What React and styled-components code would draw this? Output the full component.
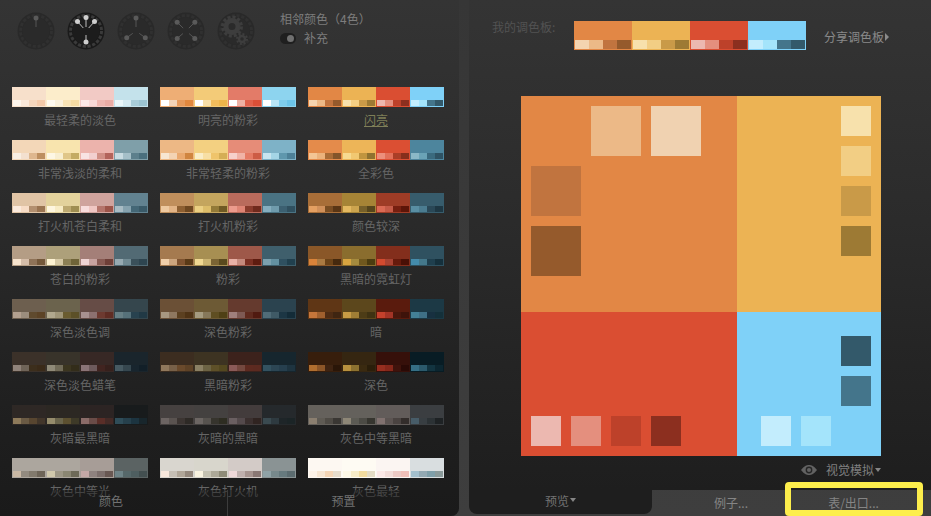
import React from "react";
import styled, { createGlobalStyle } from "styled-components";

const GlobalStyle = createGlobalStyle`
  html, body {
    margin: 0;
    padding: 0;
    background: #3a3a3a;
  }
  body {
    font-family: "Noto Sans CJK SC", "Liberation Sans", sans-serif;
  }
`;

// each palette: four groups of base colour + four small shades
const palettes = [
  ["最轻柔的淡色", "f7e0cb fdf5ec f9e8da f4d5bc f3c9a9|fcedcb fffaf0 fbf1dc f8e3b5 f5dca4|f2cac5 fbe8e6 f7d8d6 eeb7b1 eaaca5|c4e2eb eaf6f9 d5eaf1 a9cdd9 9cc4d1"],
  ["明亮的粉彩", "eeae75 ffffff f3d3b8 e69a5c e2883e|f3cb78 ffffff f8dfa8 f2bc5c efb54a|e37b68 ffffff eeb0a3 e0604a db4f37|8dd4ef ffffff b9e5f5 7fcdec 6cc4e8"],
  ["闪亮", "e28745 f4d4b0 ecb987 c1743f 955a2c|ecb354 f7e1ac f2ce84 c99a48 9d7a34|da4e32 ecb8b0 e48f7e bd412a 8c2f1f|7fd1f8 c3edfd a4e4fb 44758b 33596a"],
  ["非常浅淡的柔和", "f3d7b8 f9efe3 f3e0cf deb78f bd8f60|f8e4ae fdf7e4 f8eed0 e0c688 c4ab62|ecb3ac f8e3e3 f2cfcf d08f85 b3645b|7f9fa9 c9dbe1 a5bfc8 5c7f8c 4a6f7d"],
  ["非常轻柔的粉彩", "edb885 f7e6d2 f3d3b3 e9a86e d08540|f3d081 f9edc8 f7dfa4 efc46b d5ae55|e68c78 f6d1cb f0b3a7 e57b65 cd5c45|7eb2c7 c7e5f0 a4d5e6 5f97ad 4d8097"],
  ["全彩色", "e48b4b f3c595 ebb27c a96c37 84552a|edb558 f7da90 f1c872 c0953f 8f7230|db4f33 ec8f7c e27059 ab3e27 872f1c|4d859d 8ab8c7 6aa3b6 3a6a7e 2e5263"],
  ["打火机苍白柔和", "e0c4a5 fbeadc f7dcc6 b39070 9a7451|e3d29c fef6df f8ecc5 bda970 9f8e52|cfa39d f7dcdc efc6c3 b5756c 9c5449|628290 a9bcc4 86a2ae 446776 3a5a68"],
  ["打火机粉彩", "c08f5c eec9a0 e2b486 8e6032 6f4820|c4a55e ebcf82 dcbc69 937a38 6f5a24|b96b5c ec9b8d de8474 8a3b2c 6f2a1d|4a7383 85aebf 6f9bac 3c6071 30505f"],
  ["颜色较深", "a86e38 e4a062 d0905a 7a4d22 5a3615|a68436 e3b860 cca44e 76602a 55451c|9e3c26 da6a54 c45a47 761f10 5d1508|375c6c 598ea3 4b7c90 2a4857 1e3743"],
  ["苍白的粉彩", "b49d85 f7e3cd d5bda9 8f7358 74583a|ada07a fdf2d2 d6c9a5 8c8055 6f6438|a47f78 efd4d4 c7a3a0 875a53 6e3f38|526a74 97aab2 718a93 3a505a 2e4550"],
  ["粉彩", "a57a4f f0cfa9 cda67f 7f5330 5a3a17|a78f52 f0d892 c9b270 7a6434 5a4a1e|9e5849 e8b0a5 c58a7d 7a2f22 5e1c10|3f5f6c 7ca1af 6390a0 2f5060 21404e"],
  ["黑暗的霓虹灯", "8a5728 d9833a aa7a42 6b4318 45290e|8a6d2e d9a540 a58b3e 70581e 4b3c10|832e1c d24a2f a84232 661a0c 491006|2f5160 448bab 44788b 1f3f4e 15303c"],
  ["深色淡色调", "6d5f4f b3a08f 9b8d7d 5f4a2e 5c4326|6b634d b1a88e 9f9578 6a5c30 5c5028|664c46 a89190 8c7170 6d3a30 5f2d24|35464d 677f85 56717a 28424f 213945"],
  ["深色粉彩", "6b5036 a89780 8f7860 5c4020 4f3315|6d5a35 a59b80 86785a 5f4e22 4f4015|653a2e 9f7f7c 7e5a54 5f2a1e 501a10|2b434f 506c78 3f5a66 1c3644 142c38"],
  ["暗", "5f3615 c6763a a0602e 4e2c14 3f2511|5c471c c79b45 a07e35 4d3c16 3f3212|5a1b0d c4412c a33426 4a170c 3e130a|1c3945 438096 3f7086 173040 14303a"],
  ["深色淡色蜡笔", "3b3129 90837a 6f6458 3c2e1c 3a2a18|38332a 8f8a78 716b58 3c3620 332d1a|372825 8a7477 6d5a5c 412420 36201c|1a252c 475a62 36474f 18252e 121f28"],
  ["黑暗粉彩", "3c2d20 90785c 776048 6a4a2c 5e4226|3d3322 8a8064 6c6344 5e5028 54481f|3c221c 8a5a58 74483f 5e2a20 5c2a20|16262e 335260 2c4654 263f4e 1e3440"],
  ["深色", "371e0c b06e2f 8c5628 3f2412 2a1608|352611 b8913e 8c7230 3a2a10 2a1e0a|36100a 962e1f 85271a 3f130c 2a0a06|081c24 356f85 2b5a6c 123440 0c2630"],
  ["灰暗最黑暗", "2e2825 8d7a5a 6a5a44 584630 42362a|2c2823 958c6c 6a654c 5c5030 3e3a28|2c2423 8a6b68 6a4c48 5a2e28 442a26|181b1c 2f4d59 26404c 1c3440 18262c"],
  ["灰暗的黑暗", "464140 6c6462 5a5350 3c3532 2e2a26|444140 6c6663 57534f 36342d 2e2d22|433c3c 6a5f61 544a4c 3b302f 302421|25292c 3a4a50 2e3a40 1e2528 1b2426"],
  ["灰色中等黑暗", "65615c 8b7f70 5f5b54 4f4b45 3a3733|64615c 8e8777 5c5b54 4c4b45 36352f|625c5a 80716f 5c5452 4a4341 332d2b|3b3e41 475c68 383e42 2c3235 1e2224"],
  ["灰色中等光", "aca69e c9b8a4 928a7f 827a6d 6e6558|aca69e d0c8ac 9c9685 8a8672 6e6a58|a79d97 c4a8a6 8f827f 7d6f6c 695853|5b6363 6f8488 56686a 4e5e60 434f50"],
  ["灰色打火机", "d9d6cf f8e8dc c6bfb5 b0a698 94887c|d8d6cc faf4e0 c5c2b1 ada998 8f8c78|d3cbc7 eed8d8 bfb0ad a6948f 8a7874|8a9394 8fa2a6 77898c 677a7e 5c6c70"],
  ["灰色最轻", "fdf8f2 fdf3e8 f7e6d2 f4d5b5 e6dccb|fefbf3 fdf8e6 f7ecc8 f2dc9f e4dcc5|fbf5f2 fbe8e6 f2dcd8 ecc9c4 f0bfb8|d9dee0 a3bfcd 93a9b3 7f9fa9 8a9a9a"],
];

const Page = styled.div`
  display: flex;
  justify-content: space-between;
  width: 931px;
  height: 516px;
  overflow: hidden;
  background: linear-gradient(#363636, #3e3e3e);
`;

const LeftPanel = styled.div`
  position: relative;
  width: 459px;
  height: 516px;
  overflow: hidden;
  border-radius: 0 0 8px 0;
  background: linear-gradient(#343434, #2b2b2b 40%, #1e1e1e 85%, #1b1b1b);
`;

const Header = styled.div`
  display: flex;
  height: 87px;
  box-sizing: border-box;
  padding: 12px 0 0 17px;
`;

const Dials = styled.div`
  display: flex;
  gap: 12px;
`;

const DialIcon = styled.svg`
  width: 38px;
  height: 38px;
`;

const Harmony = styled.div`
  margin-left: 25px;
  color: #7d7d7d;
  font-size: 12px;
  line-height: 14px;
`;

const ToggleRow = styled.div`
  display: flex;
  align-items: center;
  gap: 8px;
  margin-top: 5px;
`;

const Toggle = styled.div`
  display: flex;
  align-items: center;
  justify-content: flex-end;
  width: 16px;
  height: 11px;
  margin-top: 1px;
  padding: 0 2px;
  box-sizing: border-box;
  border-radius: 6px;
  background: #1f1f1f;

  &::after {
    content: "";
    width: 7px;
    height: 7px;
    border-radius: 50%;
    background: #707070;
  }
`;

const PaletteGrid = styled.div`
  display: grid;
  grid-template-columns: repeat(3, 136px);
  grid-auto-rows: 53px;
  column-gap: 12px;
  padding-left: 12px;
`;

const PaletteItem = styled.div`
  display: flex;
  flex-direction: column;
  align-items: center;
`;

const Swatch = styled.div`
  display: flex;
  width: ${(p) => p.$width}px;
  height: ${(p) => p.$height}px;
  flex: none;
`;

const Group = styled.div`
  flex: 1;
  display: flex;
  flex-direction: column;
  justify-content: flex-end;
  padding: 0 1px 1px;
  background: ${(p) => p.$color};
`;

const Shades = styled.div`
  display: flex;
  height: ${(p) => p.$height}px;
`;

const Shade = styled.div`
  flex: 1;
  background: ${(p) => p.$color};
`;

const PaletteName = styled.div`
  margin-top: 5px;
  font-size: 12px;
  line-height: 16px;
  color: ${(p) => (p.$active ? "#7f7f58" : "#656565")};
  text-decoration: ${(p) => (p.$active ? "underline" : "none")};
`;

const LeftTabs = styled.div`
  position: absolute;
  left: 0;
  right: 0;
  bottom: 0;
  display: flex;
  height: 26px;
  background: rgba(27, 27, 27, 0.45);
`;

const LeftTab = styled.div`
  display: flex;
  justify-content: center;
  width: ${(p) => p.$width}px;
  padding: 2px ${(p) => p.$padRight || 0}px 0 0;
  box-sizing: border-box;
  font-size: 12px;
  line-height: 18px;
  color: #727272;
  border-right: ${(p) => (p.$divider ? "1px solid #3c3c3c" : "none")};
`;

const RightPanel = styled.div`
  position: relative;
  display: flex;
  flex-direction: column;
  width: 462px;
  height: 516px;
`;

const RightBody = styled.div`
  display: flex;
  flex-direction: column;
  align-items: center;
  height: 490px;
  padding-left: 2px;
  box-sizing: border-box;
  background: linear-gradient(#343434, #2b2b2b 45%, #1e1e1e);
`;

const MyPalette = styled.div`
  display: flex;
  align-self: stretch;
  height: 96px;
  box-sizing: border-box;
  padding: 21px 0 0 21px;
`;

const MyLabel = styled.div`
  width: 82px;
  font-size: 12px;
  line-height: 14px;
  color: #525252;
  margin-top: -1px;
`;

const ShareLink = styled.div`
  display: flex;
  align-items: center;
  gap: 1px;
  height: 14px;
  margin: 9px 0 0 18px;
  font-size: 12px;
  line-height: 14px;
  color: #8a8a8a;
`;

const TriangleRight = styled.span`
  width: 0;
  height: 0;
  border-style: solid;
  border-width: 4px 0 4px 4px;
  border-color: transparent transparent transparent #8a8a8a;
`;

const TriangleDown = styled.span`
  width: 0;
  height: 0;
  margin-left: 1px;
  border-style: solid;
  border-width: 4px 3.5px 0 3.5px;
  border-color: #858585 transparent transparent transparent;
`;

const Board = styled.div`
  display: grid;
  grid-template-columns: 216px 144px;
  grid-template-rows: 216px 144px;
  width: 360px;
  height: 360px;
`;

const OrangeCell = styled.div`
  display: grid;
  grid-template-columns: repeat(3, 50px);
  grid-auto-rows: 50px;
  gap: 10px;
  padding: 10px;
  background: #e28745;
`;

const YellowCell = styled.div`
  display: flex;
  flex-direction: column;
  align-items: flex-end;
  gap: 10px;
  padding: 10px;
  background: #ecb354;
`;

const RedCell = styled.div`
  display: flex;
  align-items: flex-end;
  gap: 10px;
  padding: 10px;
  background: #da4e32;
`;

const BlueCell = styled.div`
  display: grid;
  grid-template-columns: repeat(3, 30px);
  grid-auto-rows: 30px;
  gap: 10px;
  padding: 24px 0 0 24px;
  background: #7fd1f8;
`;

const Chip = styled.div`
  width: ${(p) => p.$size}px;
  height: ${(p) => p.$size}px;
  background: ${(p) => p.$color};
  grid-column: ${(p) => p.$col || "auto"};
  grid-row: ${(p) => p.$row || "auto"};
`;

const SimRow = styled.div`
  display: flex;
  align-items: center;
  justify-content: flex-end;
  align-self: stretch;
  gap: 9px;
  height: 16px;
  margin-top: 6px;
  padding-right: 50px;
  font-size: 12px;
  line-height: 16px;
  color: #7f7f7f;
`;

const SimLabel = styled.span`
  display: flex;
  align-items: center;
`;

const RightTabs = styled.div`
  display: flex;
  height: 26px;
`;

const PreviewTab = styled.div`
  display: flex;
  align-items: center;
  justify-content: center;
  width: 183px;
  height: 24px;
  padding: 0 0 4px 0;
  box-sizing: border-box;
  border-radius: 0 0 8px 8px;
  background: #1e1e1e;
  font-size: 12px;
  color: #727272;
`;

const FlatTab = styled.div`
  display: flex;
  justify-content: center;
  width: ${(p) => p.$width}px;
  padding: 3px ${(p) => p.$padRight || 0}px 0 0;
  box-sizing: border-box;
  font-size: 12px;
  line-height: 20px;
  color: #858585;
`;

const Highlight = styled.div`
  position: absolute;
  left: 316px;
  top: 482px;
  width: 138px;
  height: 34px;
  box-sizing: border-box;
  border: 6px solid #fdee4c;
  border-radius: 4px;
`;

const parseGroups = (text) =>
  text.split("|").map((group) => {
    const [base, ...shades] = group.split(" ").map((c) => "#" + c);
    return { base, shades };
  });

const PaletteSwatch = ({ colors, width, height, shadeHeight }) => (
  <Swatch $width={width} $height={height}>
    {parseGroups(colors).map((g, i) => (
      <Group key={i} $color={g.base}>
        <Shades $height={shadeHeight}>
          {g.shades.map((c, j) => (
            <Shade key={j} $color={c} />
          ))}
        </Shades>
      </Group>
    ))}
  </Swatch>
);

const polar = (angle, r) => {
  const a = ((angle - 90) * Math.PI) / 180;
  return [19 + r * Math.cos(a), 19 + r * Math.sin(a)];
};

// dots: [angle, radius] pairs, measured from twelve o'clock
const Dial = ({ dots = [], active, gears }) => {
  const dot = active ? "#cfcfcf" : "#5a5a5a";
  const ring = active ? "#1a1a1a" : "#292929";
  const ticks = active ? "#3a3a3a" : "#303030";
  const face = active ? "#1c1c1c" : "#2a2a2a";
  return (
    <DialIcon viewBox="0 0 38 38">
      <circle cx="19" cy="19" r="18.500" fill={ring} />
      <circle cx="19" cy="19" r="15.500" fill="none" stroke={ticks} strokeWidth="3" strokeDasharray="3.200 1.670" />
      <circle cx="19" cy="19" r="13.500" fill={face} />
      {dots.map(([angle, r]) => {
        const [x1, y1] = polar(angle, 4);
        const [x2, y2] = polar(angle, r);
        return (
          <g key={angle}>
            <line x1={x1} y1={y1} x2={x2} y2={y2} stroke={dot} strokeWidth="0.900" />
            <circle cx={x2} cy={y2} r="2.500" fill={dot} />
          </g>
        );
      })}
      {gears && (
        <g fill="none" stroke="#3d3d3d">
          <circle cx="15" cy="14.500" r="6" strokeWidth="5" />
          <circle cx="15" cy="14.500" r="9.500" strokeWidth="3" strokeDasharray="3 2" />
          <circle cx="25" cy="27" r="3" strokeWidth="2.500" />
          <circle cx="25" cy="27" r="5" strokeWidth="2" strokeDasharray="2 1.900" />
        </g>
      )}
    </DialIcon>
  );
};

const EyeIcon = () => (
  <svg width="16" height="10" viewBox="0 0 16 10">
    <path d="M0 5C3 1 5.500 0 8 0s5 1 8 5c-3 4-5.500 5-8 5S3 9 0 5z" fill="#626262" />
    <circle cx="8" cy="5" r="3.400" fill="#262626" />
    <circle cx="8" cy="5" r="2" fill="#626262" />
  </svg>
);

const App = () => {
  return (
    <>
      <GlobalStyle />
      <Page>
        <LeftPanel>
          <Header>
            <Dials>
              <Dial dots={[[0, 13]]} />
              <Dial dots={[[0, 13.500], [42, 12.700], [-42, 12.700], [180, 11]]} active />
              <Dial dots={[[0, 13], [126, 11.500], [-126, 11.500]]} />
              <Dial dots={[[45, 12.500], [130, 11.500], [-45, 12.500], [-130, 11.500]]} />
              <Dial gears />
            </Dials>
            <Harmony>
              相邻颜色（4色）
              <ToggleRow>
                <Toggle />
                补充
              </ToggleRow>
            </Harmony>
          </Header>
          <PaletteGrid>
            {palettes.map(([name, colors]) => (
              <PaletteItem key={name}>
                <PaletteSwatch colors={colors} width={136} height={20} shadeHeight={6} />
                <PaletteName $active={name === "闪亮"}>{name}</PaletteName>
              </PaletteItem>
            ))}
          </PaletteGrid>
          <LeftTabs>
            <LeftTab $width={228} $divider $padRight={5}>颜色</LeftTab>
            <LeftTab $width={231}>预置</LeftTab>
          </LeftTabs>
        </LeftPanel>
        <RightPanel>
          <RightBody>
            <MyPalette>
              <MyLabel>我的调色板:</MyLabel>
              <PaletteSwatch colors={palettes[2][1]} width={232} height={29} shadeHeight={9} />
              <ShareLink>
                分享调色板
                <TriangleRight />
              </ShareLink>
            </MyPalette>
            <Board>
              <OrangeCell>
                <Chip $size={50} $color="#ecb987" $col={2} $row={1} />
                <Chip $size={50} $color="#f0d2b1" $col={3} $row={1} />
                <Chip $size={50} $color="#c1743f" $col={1} $row={2} />
                <Chip $size={50} $color="#955a2c" $col={1} $row={3} />
              </OrangeCell>
              <YellowCell>
                <Chip $size={30} $color="#f7e1ac" />
                <Chip $size={30} $color="#f2ce84" />
                <Chip $size={30} $color="#c99a48" />
                <Chip $size={30} $color="#9d7a34" />
              </YellowCell>
              <RedCell>
                <Chip $size={30} $color="#ecb8b0" />
                <Chip $size={30} $color="#e48f7e" />
                <Chip $size={30} $color="#bd412a" />
                <Chip $size={30} $color="#8c2f1f" />
              </RedCell>
              <BlueCell>
                <Chip $size={30} $color="#33596a" $col={3} $row={1} />
                <Chip $size={30} $color="#44758b" $col={3} $row={2} />
                <Chip $size={30} $color="#c3edfd" $col={1} $row={3} />
                <Chip $size={30} $color="#a4e4fb" $col={2} $row={3} />
              </BlueCell>
            </Board>
            <SimRow>
              <EyeIcon />
              <SimLabel>
                视觉模拟
                <TriangleDown />
              </SimLabel>
            </SimRow>
          </RightBody>
          <RightTabs>
            <PreviewTab>
              预览
              <TriangleDown />
            </PreviewTab>
            <FlatTab $width={158}>例子...</FlatTab>
            <FlatTab $width={121} $padRight={34}>表/出口...</FlatTab>
          </RightTabs>
          <Highlight />
        </RightPanel>
      </Page>
    </>
  );
};

export default App;
